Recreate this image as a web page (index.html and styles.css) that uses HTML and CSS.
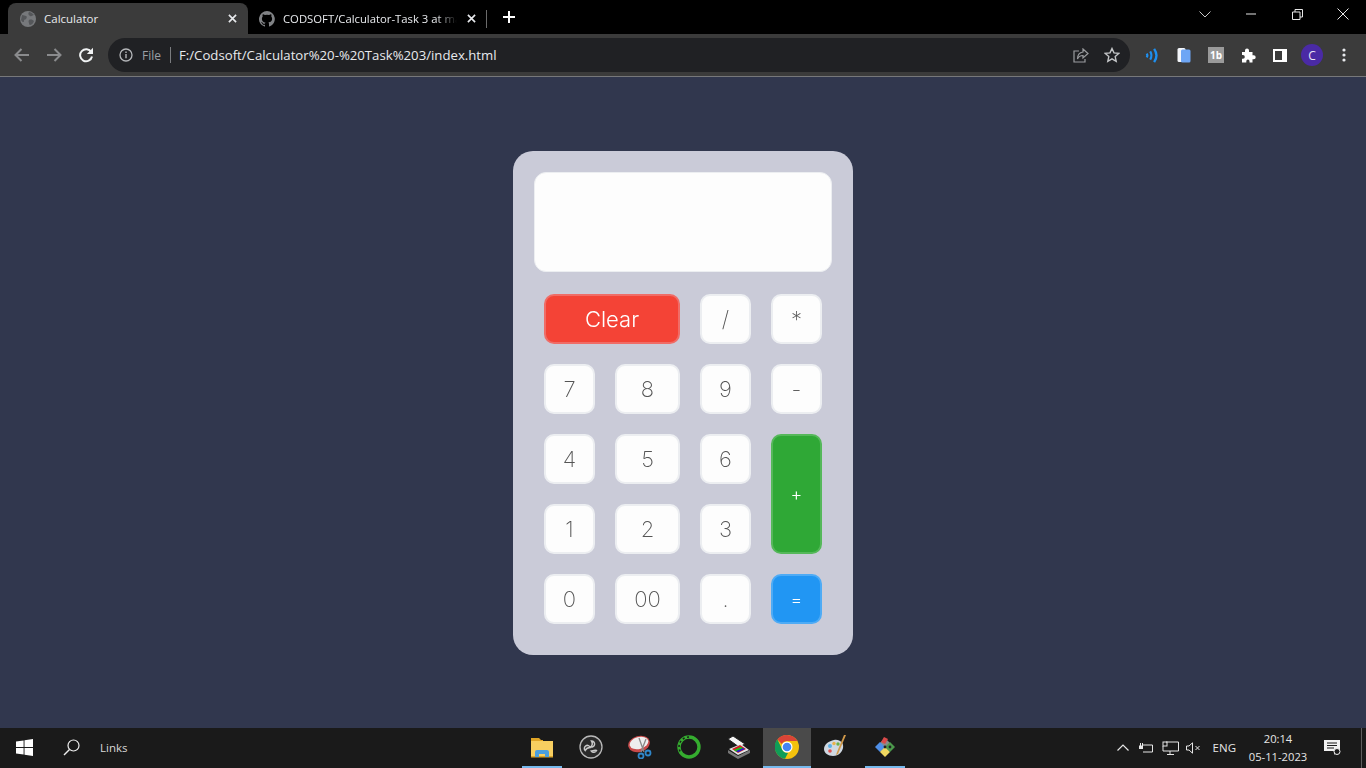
FILE: index.html
```html
<!DOCTYPE html>
<html lang="en">
<head>
<meta charset="utf-8">
<title>Calculator</title>
<link rel="stylesheet" href="styles.css">
</head>
<body>
<div class="screen">
  <header class="chrome">
    <div class="tabstrip">
      <div class="tab tab-active">
        <svg class="fav" viewBox="0 0 16 16"><circle cx="8" cy="8" r="8" fill="#77797c"/><path d="M2 4c2 0 3 1 4 1s1 2 0 3-2 0-2 2-2 1-3-1zM9 1c2 0 3 1 5 3-2 0-2 2-4 1S8 2 9 1zM9 9c2-1 4 0 5 1-1 3-3 4-4 4s-1-2-1-2-1-2 0-3z" fill="#55575a"/></svg>
        <span class="tab-title">Calculator</span>
        <svg class="tab-x" viewBox="0 0 10 10"><path d="M1 1l8 8M9 1l-8 8" stroke="#e8eaed" stroke-width="1.8"/></svg>
      </div>
      <div class="tab tab-idle">
        <svg class="fav" viewBox="0 0 16 16"><path fill="#808285" d="M8 0a8 8 0 0 0-2.5 15.6c.4.1.5-.2.5-.4v-1.4c-2.2.5-2.7-1-2.7-1-.4-.9-.9-1.200-.9-1.200-.7-.5.1-.5.1-.5.8.1 1.200.8 1.200.8.7 1.200 1.900.9 2.300.7.1-.5.3-.9.5-1.100-1.800-.2-3.600-.9-3.600-4 0-.9.3-1.600.8-2.100-.1-.2-.4-1 .1-2.100 0 0 .7-.2 2.200.8a7.600 7.600 0 0 1 4 0c1.500-1 2.200-.8 2.200-.8.4 1.100.2 1.900.1 2.100.5.6.8 1.300.8 2.100 0 3.100-1.900 3.700-3.700 3.900.3.300.6.800.6 1.500v2.200c0 .2.100.5.600.4A8 8 0 0 0 8 0z"/></svg>
        <span class="tab-title tab-fade">CODSOFT/Calculator-Task 3 at main</span>
        <svg class="tab-x" viewBox="0 0 10 10"><path d="M1 1l8 8M9 1l-8 8" stroke="#e8eaed" stroke-width="1.8"/></svg>
      </div>
      <span class="tab-sep"></span>
      <svg class="tab-new" viewBox="0 0 12 12"><path d="M6 0v12M0 6h12" stroke="#fff" stroke-width="2"/></svg>
      <div class="win-controls">
        <span class="win-btn"><svg width="12" height="7" viewBox="0 0 12 7"><path d="M.5.5L6 6l5.500-5.500" fill="none" stroke="#c8c8c8"/></svg></span>
        <span class="win-btn"><svg width="10" height="2" viewBox="0 0 10 2"><path d="M0 1h10" stroke="#e6e6e6"/></svg></span>
        <span class="win-btn"><svg width="11" height="11" viewBox="0 0 11 11"><path d="M.5 3h7.500v7.500H.5zM3 3V.5h7.500V8H8" fill="none" stroke="#e6e6e6"/></svg></span>
        <span class="win-btn"><svg width="12" height="12" viewBox="0 0 12 12"><path d="M.5.5l11 11M11.500.5l-11 11" stroke="#e6e6e6"/></svg></span>
      </div>
    </div>
    <div class="toolbar">
      <span class="tool"><svg width="16" height="14" viewBox="0 0 16 14"><path d="M15 7H2M7.500 1L1.500 7l6 6" fill="none" stroke="#8a8b8d" stroke-width="2"/></svg></span>
      <span class="tool"><svg width="16" height="14" viewBox="0 0 16 14"><path d="M1 7h13M8.500 1l6 6-6 6" fill="none" stroke="#8a8b8d" stroke-width="2"/></svg></span>
      <span class="tool"><svg width="16" height="16" viewBox="0 0 16 16"><path d="M13.300 5.200A6 6 0 1 0 14 9.500" fill="none" stroke="#f1f3f4" stroke-width="2"/><path d="M15 0.800v6.200H8.800z" fill="#f1f3f4"/></svg></span>
      <div class="omnibox">
        <svg class="info" width="14" height="14" viewBox="0 0 14 14"><circle cx="7" cy="7" r="6" fill="none" stroke="#b4b6b9" stroke-width="1.300"/><path d="M7 6v4.300M7 3.500v1.400" stroke="#b4b6b9" stroke-width="1.400"/></svg>
        <span class="scheme">File</span>
        <span class="omni-sep"></span>
        <span class="url">F:/Codsoft/Calculator%20-%20Task%203/index.html</span>
        <svg class="share" width="16" height="15" viewBox="0 0 16 15"><path d="M6 3H1v11h11v-3" fill="none" stroke="#9a9c9f" stroke-width="1.200"/><path d="M10 1l5 4.500L10 10V7.500C7.500 7.500 5.500 8.500 4.500 11c0-4 2-6.500 5.500-7z" fill="none" stroke="#9a9c9f" stroke-width="1.200"/></svg>
        <svg class="star" width="16" height="16" viewBox="0 0 16 16"><path d="M8 1.500l2 4.400 4.800.5-3.600 3.200 1 4.700L8 11.900l-4.200 2.400 1-4.700L1.200 6.400 6 5.900z" fill="none" stroke="#c4c6c8" stroke-width="1.400"/></svg>
      </div>
      <span class="tool tool-first"><svg width="14" height="15" viewBox="0 0 12 14"><g fill="none" stroke="#1e90f0" stroke-width="2"><path d="M1 5.300c.8 1 .8 2.400 0 3.400"/><path d="M4.300 3.200c1.500 2.400 1.500 5.200 0 7.600"/><path d="M8 .8c2.800 4 2.800 8.400 0 12.400" stroke-width="2.200"/></g></svg></span>
      <span class="tool"><svg width="14" height="16" viewBox="0 0 14 16"><rect x="0.500" y="1" width="8" height="14" rx="1.500" fill="#f4f6fa"/><rect x="4" y="2.500" width="9.500" height="13" rx="1.500" fill="#6ea6f5"/></svg></span>
      <span class="tool"><span class="tb-badge">1b</span></span>
      <span class="tool"><svg width="15" height="15" viewBox="0 0 15 15"><path d="M1 4h3V2.500a2 2 0 0 1 4 0V4h3.500v3.200h1.200a2 2 0 0 1 0 4h-1.200V14.500H8.500v-1.300a1.600 1.600 0 0 0-3.200 0v1.300H1v-3.800h1a1.800 1.800 0 0 0 0-3.600H1z" fill="#fff"/></svg></span>
      <span class="tool"><svg width="14" height="13" viewBox="0 0 14 13"><rect x="1" y="1" width="12" height="11" fill="none" stroke="#fff" stroke-width="2"/><rect x="9" y="1" width="4" height="11" fill="#fff"/></svg></span>
      <span class="tool"><span class="avatar">C</span></span>
      <span class="tool"><svg width="4" height="14" viewBox="0 0 4 14"><circle cx="2" cy="2" r="1.600" fill="#e8eaed"/><circle cx="2" cy="7" r="1.600" fill="#e8eaed"/><circle cx="2" cy="12" r="1.600" fill="#e8eaed"/></svg></span>
    </div>
  </header>

  <main class="page">
    <div class="calc">
      <div class="display"></div>
      <div class="keys">
        <button class="key key-clear">Clear</button>
        <button class="key">/</button>
        <button class="key">*</button>
        <button class="key">7</button>
        <button class="key">8</button>
        <button class="key">9</button>
        <button class="key">-</button>
        <button class="key">4</button>
        <button class="key">5</button>
        <button class="key">6</button>
        <button class="key key-plus">+</button>
        <button class="key">1</button>
        <button class="key">2</button>
        <button class="key">3</button>
        <button class="key">0</button>
        <button class="key">00</button>
        <button class="key">.</button>
        <button class="key key-equal">=</button>
      </div>
    </div>
  </main>

  <footer class="taskbar">
    <div class="tb-left">
      <svg class="start" width="17" height="17" viewBox="0 0 17 17"><path d="M0 2.500l7.600-1.100v6.500H0zM8.500 1.300L17 0v7.900H8.500zM0 8.900h7.600v6.600L0 14.400zM8.500 8.900H17V17l-8.500-1.300z" fill="#fff"/></svg>
      <svg class="search" width="17" height="17" viewBox="0 0 17 17"><circle cx="10.500" cy="6.500" r="5.500" fill="none" stroke="#eee" stroke-width="1.200"/><path d="M6.500 10.500L1 16" stroke="#eee" stroke-width="1.400"/></svg>
      <span class="links">Links</span>
    </div>
    <div class="tb-apps">
      <span class="app app-open"><svg width="24" height="21" viewBox="0 0 24 21"><path d="M1 1h8l2 2h2v3H1z" fill="#e0a526"/><rect x="1" y="4" width="22" height="16" fill="#f8cf60"/><path d="M1 19h22v1.500H1z" fill="#dca62c"/><path d="M5 20v-5a2 2 0 0 1 2-2h10a2 2 0 0 1 2 2v5h-4v-3H9v3z" fill="#4a9fdf"/></svg></span>
      <span class="app app-obs"><svg width="24" height="24" viewBox="0 0 24 24"><circle cx="12" cy="12" r="11" fill="#2a2a2a" stroke="#b9b9b9" stroke-width="1.300"/><g fill="none" stroke="#c9c9c9" stroke-width="1.500"><path d="M12.500 6a3 3 0 1 1-1 5.800c1.800-1 2.500-3.500 1-5.800z"/><path d="M6.200 15.500a3 3 0 1 1 5-3c-2 0-4 1-5 3z"/><path d="M17.500 15.500a3 3 0 0 1-5.200.6c2-.4 3.700-1.500 5.200-.6z"/></g></svg></span>
      <span class="app app-snip"><svg width="24" height="24" viewBox="0 0 24 24"><ellipse cx="11" cy="9" rx="11" ry="8" transform="rotate(-15 11 9)" fill="#c84a4a"/><ellipse cx="11" cy="8" rx="9.500" ry="6" transform="rotate(-15 11 8)" fill="#eee"/><path d="M11 3l5 14M18 4l-5 13" stroke="#888" stroke-width="1.300"/><circle cx="13" cy="21" r="2.500" fill="none" stroke="#2f86c8" stroke-width="1.800"/><circle cx="20" cy="18" r="2.500" fill="none" stroke="#2f86c8" stroke-width="1.800"/></svg></span>
      <span class="app app-ring"><svg width="24" height="24" viewBox="0 0 24 24"><circle cx="12" cy="12" r="10" fill="none" stroke="#35ad2f" stroke-width="3.400"/><path d="M12 2A10 10 0 0 0 4 18" fill="none" stroke="#1b1b1b" stroke-width="1.500" stroke-dasharray="2 2.500"/></svg></span>
      <span class="app app-scan"><svg width="24" height="24" viewBox="0 0 24 24"><path d="M1 4l5-3 12 8-6 3z" fill="#f5f5f5" stroke="#222"/><path d="M2 14l12-5 8 6-11 5z" fill="#e5e5e5"/><path d="M5 14l8-4 6 4-8 4z" fill="#c22"/><path d="M7 15l7-3 2 1.500-7 3z" fill="#1c1"/><path d="M9 16l7-3 2 1-7 3.300z" fill="#22c"/><path d="M1 15l10 6 12-6v3l-12 6-10-6z" fill="#777"/></svg></span>
      <span class="app app-chrome"><svg width="24" height="24" viewBox="0 0 24 24"><circle cx="12" cy="12" r="12" fill="#f4c20d"/><path d="M12 0a12 12 0 0 1 10.400 6H12a6 6 0 0 0-5.200 3L2.400 4.400A12 12 0 0 1 12 0z" fill="#db4437"/><path d="M2.400 4.400L7.500 15A6 6 0 0 0 13 18l-3 5.800A12 12 0 0 1 2.400 4.400z" fill="#0f9d58"/><circle cx="12" cy="12" r="5.500" fill="#fff"/><circle cx="12" cy="12" r="4.300" fill="#4285f4"/></svg></span>
      <span class="app app-paint"><svg width="24" height="24" viewBox="0 0 24 24"><path d="M10 5c6-1 10 3 9 8-1 4-4 8-10 8-5 0-9-3-9-7 0-5 5-8 10-9z" fill="#cfd8e2"/><circle cx="6" cy="11" r="2" fill="#5ab0e8"/><circle cx="10" cy="8.500" r="1.700" fill="#e8b24a"/><circle cx="14" cy="9" r="1.700" fill="#6ab04a"/><circle cx="6" cy="16" r="1.800" fill="#e05050"/><path d="M22 0l-8 19-2 1 1-3 7-17z" fill="#d19a4a"/></svg></span>
      <span class="app app-open"><svg width="24" height="24" viewBox="0 0 24 24"><path d="M12 3l9 9-9 9-9-9z" fill="#8a8a8a"/><path d="M2 12l5-5 5 5-5 5z" fill="#4f8fe8"/><path d="M7 17l5-5 5 5-5 5z" fill="#f0d860"/><path d="M12 12l5-5 5 5-5 5z" fill="#4c9a4c"/><path d="M8 7l3-5 4 2-3 5z" fill="#d94a4a"/><circle cx="12" cy="12" r="1.400" fill="#222"/><circle cx="17" cy="12" r="1.400" fill="#222"/></svg></span>
    </div>
    <div class="tb-tray">
      <svg class="tray-up" width="12" height="7" viewBox="0 0 12 7"><path d="M.5 6.500L6 1l5.500 5.500" fill="none" stroke="#e6e6e6" stroke-width="1.200"/></svg>
      <svg class="tray-bat" width="16" height="12" viewBox="0 0 16 12"><path d="M5 3h9.500v7H5M1 6h3M2.500 1v3M4.500 1v3" fill="none" stroke="#e6e6e6"/><rect x="1" y="3.500" width="4" height="3.500" fill="#e6e6e6"/></svg>
      <svg class="tray-net" width="17" height="14" viewBox="0 0 17 14"><path d="M4 1h12.500v9H1v-5M8 10v3M5 13.500h7" fill="none" stroke="#e6e6e6"/><rect x="1" y="1" width="4" height="4" fill="none" stroke="#e6e6e6"/></svg>
      <svg class="tray-vol" width="15" height="12" viewBox="0 0 15 12"><path d="M.5 4h2.500L6.500.8v10.400L3 8H.5z" fill="none" stroke="#e6e6e6"/><path d="M9.500 4l4 4M13.500 4l-4 4" stroke="#e6e6e6"/></svg>
      <span class="eng">ENG</span>
      <span class="clock"><span>20:14</span><span>05-11-2023</span></span>
      <svg class="tray-note" width="17" height="16" viewBox="0 0 17 16"><path d="M0 0h16v11h-3l-3 4v-4H0z" fill="#f2f2f2"/><path d="M3 3h10M3 5.500h10M3 8h7" stroke="#1b1b1b"/><circle cx="13" cy="11.500" r="3" fill="#1b1b1b" stroke="#f2f2f2"/></svg>
      <span class="desk-line"></span>
    </div>
  </footer>
</div>
</body>
</html>
```

FILE: styles.css
```css
* { box-sizing: border-box; }
html, body { margin: 0; padding: 0; }
body { font-family: "Open Sans", "Liberation Sans", sans-serif; }
.screen { width: 1366px; height: 768px; display: flex; flex-direction: column; overflow: hidden; background: #31374e; }

.chrome { flex: none; height: 77px; display: flex; flex-direction: column; }
.tabstrip { height: 34px; background: #000; display: flex; align-items: flex-end; padding-left: 8px; }
.tab { height: 31px; display: flex; align-items: center; font-size: 11.5px; color: #e8eaed; }
.tab-active { width: 240px; background: #3b3b3b; border-radius: 8px 8px 0 0; padding: 0 11px 0 12px; }
.tab-idle { width: 235px; margin-left: 3px; padding: 0 10px 0 8px; }
.fav { width: 16px; height: 16px; flex: none; margin-right: 8px; }
.tab-title { flex: 1; white-space: nowrap; overflow: hidden; }
.tab-fade { font-size: 11.3px; -webkit-mask-image: linear-gradient(to right, #000 88%, transparent 100%); mask-image: linear-gradient(to right, #000 88%, transparent 100%); margin-right: 10px; }
.tab-x { width: 9px; height: 9px; flex: none; }
.tab-sep { width: 1px; height: 18px; background: #6a6a6a; margin: 0 0 6px 0; }
.tab-new { width: 12px; height: 12px; margin: 0 0 11px 16px; }
.win-controls { margin-left: auto; align-self: flex-start; display: flex; height: 30px; }
.win-btn { width: 46px; height: 28px; display: flex; align-items: center; justify-content: center; }

.toolbar { height: 43px; background: #3b3b3b; border-bottom: 1px solid #77787a; display: flex; align-items: center; padding: 0 6px; }
.tool { width: 32px; height: 32px; display: flex; align-items: center; justify-content: center; flex: none; }
.tool-first { margin-left: 6px; }
.omnibox { width: 1022px; height: 34px; margin-left: 6px; background: #202124; border-radius: 17px; display: flex; align-items: center; padding: 0 10px 0 11px; font-size: 13px; color: #e8eaed; }
.info { flex: none; }
.scheme { margin-left: 9px; font-size: 12px; color: #9aa0a6; }
.omni-sep { width: 1px; height: 16px; background: #7a7c7f; margin: 0 8px 0 9px; }
.url { flex: 1; font-size: 13.2px; white-space: nowrap; }
.share { margin-right: 15px; flex: none; }
.star { flex: none; }
.tb-badge { width: 16px; height: 16px; background: #9a9a9a; color: #fff; font-size: 10px; font-weight: 700; display: flex; align-items: center; justify-content: center; }
.avatar { width: 22px; height: 22px; border-radius: 50%; background: #4a2aa5; color: #e8e4f5; font-size: 12px; display: flex; align-items: center; justify-content: center; }

.page { flex: 1; display: flex; justify-content: center; padding-top: 74px; }
.calc { width: 340px; height: 504px; background: #cacbd8; border-radius: 20px; padding: 21px; }
.display { width: 298px; height: 100px; background: #fdfdfd; border: 1px solid #eceef1; border-radius: 12px; }
.keys { display: grid; grid-template-columns: 51px 65px 51px 51px; grid-auto-rows: 50px; gap: 20px; margin: 22px 0 0 10px; will-change: transform; }
.key { font-family: Inter, "Liberation Sans", sans-serif; font-weight: 200; font-size: 22px; color: #555; background: #fdfdfd; border: 2px solid #eceef1; border-radius: 10px; padding: 0; }
.key-clear { grid-column: span 2; background: #f44336; border-color: #f06c66; color: #fff; font-weight: 300; }
.key-plus { grid-column: 4; grid-row: 3 / span 2; background: #2fa836; border-color: #55b85a; color: #fff; font-size: 18px; font-weight: 300; }
.key-equal { background: #2196f3; border-color: #4eabf5; color: #fff; font-size: 18px; font-weight: 300; }

.taskbar { flex: none; height: 40px; background: #1a1a1a; display: flex; align-items: stretch; color: #e6e6e6; }
.tb-left { width: 522px; display: flex; align-items: center; padding: 0 0 2px 16px; flex: none; }
.search { margin-left: 30px; }
.links { margin-left: 20px; font-size: 11.5px; color: #d8d8d8; }
.tb-apps { display: flex; align-items: stretch; flex: none; }
.app { width: 40px; display: flex; align-items: center; justify-content: center; border-bottom: 2px solid transparent; }
.app-open { border-bottom-color: #76b9ed; }
.app-obs { margin-left: 9px; }
.app-snip { margin-left: 9px; }
.app-ring { margin-left: 9px; }
.app-scan { margin-left: 10px; }
.app-chrome { width: 48px; margin-left: 4px; background: #4a4a4a; border-bottom-color: #76b9ed; }
.app-paint { margin-left: 5px; }
.app-paint + .app-open { margin-left: 9px; }
.tb-tray { margin-left: auto; display: flex; align-items: center; padding: 0 4px 1px 0; }
.tray-bat { margin-left: 9px; }
.tray-net { margin-left: 8px; }
.tray-vol { margin-left: 7px; }
.eng { margin-left: 12px; font-size: 11.5px; }
.clock { width: 72px; margin-left: 6px; display: flex; flex-direction: column; align-items: center; font-size: 11.2px; line-height: 18px; }
.tray-note { margin-left: 10px; }
.desk-line { width: 1px; height: 40px; background: #5e5e5e; margin-left: 20px; }
```
